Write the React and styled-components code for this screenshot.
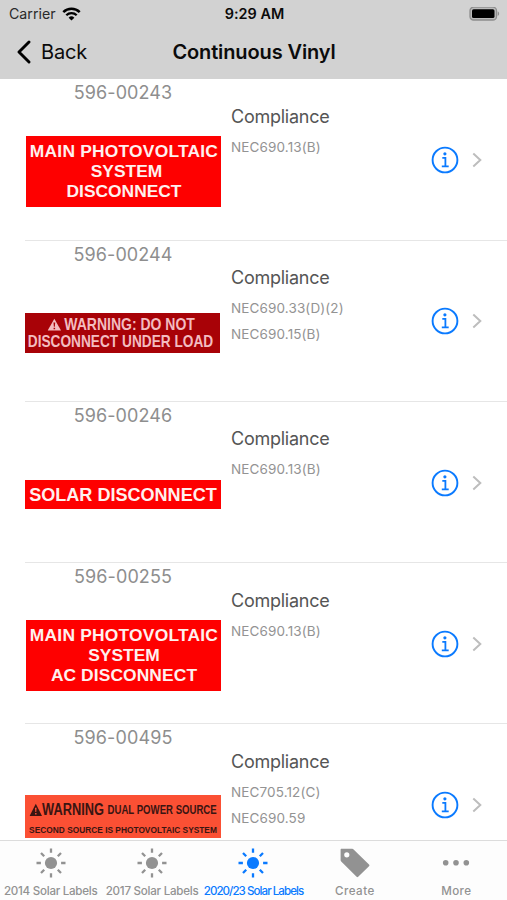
import React from "react"
import styled, { createGlobalStyle } from "styled-components"

const GlobalStyle = createGlobalStyle`
  body {
    margin: 0;
    background: #fff;
    font-family: Inter, "Liberation Sans", sans-serif;
  }

  * {
    box-sizing: border-box;
  }
`

const Screen = styled.div`
  display: flex;
  flex-direction: column;
  width: 507px;
  height: 900px;
  overflow: hidden;
  background: #fff;
`

const Header = styled.header`
  flex: none;
  height: 79.3px;
  background: #d2d2d2;
  color: #0b0b0b;
`

const StatusBar = styled.div`
  display: grid;
  grid-template-columns: 1fr auto 1fr;
  align-items: center;
  height: 27px;
  padding: 0 7px 0 9px;
`

const Carrier = styled.div`
  display: flex;
  align-items: center;
  gap: 6px;
  font-size: 14.2px;
  letter-spacing: 0;
  color: #2a2a2a;
`

const Clock = styled.div`
  font-size: 14.4px;
  font-weight: 600;
  letter-spacing: 0.05px;
`

const Battery = styled.svg`
  justify-self: end;
`

const NavBar = styled.div`
  display: grid;
  grid-template-columns: 1fr auto 1fr;
  align-items: center;
  height: 50px;
  padding: 0 15px 0 16px;
`

const BackButton = styled.button`
  display: flex;
  align-items: center;
  gap: 9px;
  padding: 0;
  border: 0;
  background: none;
  color: inherit;
  font: 400 20px Inter, sans-serif;
  letter-spacing: -0.2px;
`

const Title = styled.h1`
  margin: 0;
  font-size: 20px;
  font-weight: 600;
  letter-spacing: -0.12px;
`

const List = styled.ul`
  flex: 1;
  min-height: 0;
  margin: 0;
  padding: 0;
  overflow: hidden;
  list-style: none;
`

const Row = styled.li`
  display: grid;
  grid-template-columns: 196px 1fr auto;
  height: 161.25px;
  margin-left: 25px;
  border-bottom: 1.5px solid #e6e6e6;
`

const Product = styled.div`
  display: flex;
  flex-direction: column;
`

const PartNumber = styled.div`
  height: 25px;
  font-size: 18px;
  line-height: 27px;
  letter-spacing: 0.1px;
  text-align: center;
  color: #8e8e8e;
`

const SignArea = styled.div`
  display: flex;
  align-items: center;
  height: 134.5px;
`

const Sign = styled.div`
  display: flex;
  flex-direction: column;
  justify-content: center;
  width: ${p => p.$width || 195}px;
  height: ${p => p.$height}px;
  margin-left: ${p => p.$left || 0}px;
  padding-top: ${p => p.$top || 0}px;
  background: ${p => p.$bg};
  color: ${p => p.$color};
  font-family: "Liberation Sans", Arial, sans-serif;
  font-weight: 700;
`

const SignLine = styled.div`
  display: flex;
  flex: none;
  align-items: center;
  justify-content: center;
  gap: ${p => p.$gap || 0}px;
  height: ${p => p.$height}px;
  white-space: nowrap;
  transform: translateX(${p => p.$shift || 0}px) scaleX(${p => p.$stretch || 1});

  > * {
    flex: none;
  }
`

const SignText = styled.span`
  font-size: ${p => p.$size}px;
  line-height: 1;
  letter-spacing: ${p => p.$spacing || 0}px;
`

const Details = styled.div`
  padding: 27.7px 0 0 10px;
`

const Heading = styled.div`
  font-size: 18px;
  line-height: 20px;
  letter-spacing: -0.25px;
  color: #555;
`

const Codes = styled.div`
  padding-top: 7px;
`

const Code = styled.div`
  height: 26px;
  font-size: 13.5px;
  line-height: 26px;
  letter-spacing: 0.12px;
  color: #939393;
`

const Actions = styled.div`
  display: flex;
  align-items: center;
  gap: 13px;
  padding: 1.5px 24px 0 0;
`

const TabBar = styled.nav`
  display: grid;
  flex: none;
  grid-template-columns: repeat(5, minmax(0, 1fr));
  height: 60.5px;
  border-top: 1.5px solid #dcdcdc;
  background: #fdfdfd;
`

const Tab = styled.div`
  display: flex;
  flex-direction: column;
  align-items: center;
  padding-top: 7.5px;
  color: ${p => (p.$active ? "#0a7aff" : "#929292")};
`

const TabLabel = styled.span`
  margin-top: 5px;
  font-size: 11.6px;
  font-weight: 500;
  line-height: 16px;
  letter-spacing: ${p => p.$spacing}px;
  white-space: nowrap;
`

const WifiIcon = () => (
  <svg width="19" height="14" viewBox="0 0 19 14" fill="none" stroke="#000">
    <path d="M1.3 5.2a11.6 11.6 0 0 1 16.4 0" strokeWidth="2.5" />
    <path d="M4.3 8.3a7.4 7.4 0 0 1 10.4 0" strokeWidth="2.3" />
    <path d="M9.5 13.6 6.6 10.7a4.1 4.1 0 0 1 5.8 0z" fill="#000" stroke="none" />
  </svg>
)

const BatteryIcon = () => (
  <Battery width="31" height="14" viewBox="0 0 31 14">
    <rect x="1" y="0.2" width="26.5" height="12.8" rx="3.6" fill="#bbb" stroke="#8d8d8d" strokeWidth="1.3" />
    <rect x="3" y="2.2" width="22.5" height="8.8" rx="1.6" fill="#000" />
    <path d="M28.7 4.5v4.4c1.9-.6 1.9-3.8 0-4.4z" fill="#8d8d8d" />
  </Battery>
)

const BackIcon = () => (
  <svg width="16" height="24" viewBox="0 0 16 24" fill="none">
    <path d="M13 2 3 12l10 10" stroke="#000" strokeWidth="2.9" strokeLinecap="round" strokeLinejoin="round" />
  </svg>
)

const InfoIcon = () => (
  <svg width="28" height="28" viewBox="0 0 28 28" fill="none" stroke="#0a7aff">
    <circle cx="14" cy="14" r="12.4" strokeWidth="1.9" />
    <circle cx="13.9" cy="7.8" r="1.6" fill="#0a7aff" stroke="none" />
    <path d="M11.3 11.8h3.1v8.4M10.8 20.4h6.9" strokeWidth="1.8" />
  </svg>
)

const ChevronIcon = () => (
  <svg width="11" height="16" viewBox="0 0 11 16" fill="none">
    <path d="m1.3 1.6 7 6.4-7 6.4" stroke="#bdbdbd" strokeWidth="2" />
  </svg>
)

const AlertIcon = ({ width, height, mark }) => (
  <svg width={width} height={height} viewBox="0 0 14 14" preserveAspectRatio="none">
    <path d="M7 .8 13.8 13H.2z" fill="currentColor" />
    <path d="M6.1 4.7h1.8l-.4 4.4h-1zM6.2 10h1.6v1.6H6.2z" fill={mark} />
  </svg>
)

const SunIcon = () => (
  <svg width="30" height="30" viewBox="0 0 30 30" stroke="currentColor">
    <circle cx="15" cy="15" r="6.1" fill="currentColor" stroke="none" />
    <path
      d="M15 .5v4.2M15 25.3v4.2M.5 15h4.4M25.1 15h4.4M5 5l3.2 3.2M21.8 21.8 25 25M5 25l3.2-3.2M21.8 8.2 25 5"
      strokeWidth="2.3"
    />
  </svg>
)

const TagIcon = () => (
  <svg width="30" height="30" viewBox="0 0 30 30">
    <path
      d="M1.6.8h10.6c.6 0 1 .2 1.4.6l15.4 15.2c.6.6.6 1 0 1.6L18.2 28.8c-.6.6-1 .6-1.6 0L1.2 13.4C.8 13 .6 12.6.6 12V1.8c0-.7.3-1 1-1zM6.8 4.2a2.6 2.6 0 1 0 0 5.2 2.6 2.6 0 0 0 0-5.2z"
      fill="currentColor"
      fillRule="evenodd"
    />
  </svg>
)

const MoreIcon = () => (
  <svg width="30" height="30" viewBox="0 0 30 30" fill="currentColor">
    <circle cx="4.7" cy="14.7" r="2.8" />
    <circle cx="15" cy="14.7" r="2.8" />
    <circle cx="25.3" cy="14.7" r="2.8" />
  </svg>
)

const PvSign = ({ last, shift, spacing }) => (
  <Sign $height={71} $left={1} $top={1} $bg="#fe0000" $color="#fff0ee">
    <SignLine $height={20} $shift={0.5}>
      <SignText $size={17.4} $spacing={0.22}>MAIN PHOTOVOLTAIC</SignText>
    </SignLine>
    <SignLine $height={20} $shift={shift}>
      <SignText $size={17.4}>SYSTEM</SignText>
    </SignLine>
    <SignLine $height={20} $shift={0.5}>
      <SignText $size={17.4} $spacing={spacing}>{last}</SignText>
    </SignLine>
  </Sign>
)

const LoadSign = () => (
  <Sign $height={40} $bg="#a80207" $color="#f3bcc0">
    <SignLine $height={16.5} $gap={4} $shift={-1.5} $stretch={0.86}>
      <AlertIcon width={16} height={13.5} mark="#a80207" />
      <SignText $size={16.3}>WARNING: DO NOT</SignText>
    </SignLine>
    <SignLine $height={16.5} $shift={-2} $stretch={0.84}>
      <SignText $size={16.3}>DISCONNECT UNDER LOAD</SignText>
    </SignLine>
  </Sign>
)

const SolarSign = () => (
  <Sign $height={29} $width={196} $top={1} $bg="#fe0000" $color="#fff0ee">
    <SignLine $height={20} $stretch={0.95}>
      <SignText $size={19}>SOLAR DISCONNECT</SignText>
    </SignLine>
  </Sign>
)

const DualSign = () => (
  <Sign $height={43} $width={196} $top={7} $bg="#fb5034" $color="#3a1512">
    <SignLine $height={20} $stretch={0.8}>
      <AlertIcon width={16} height={14} mark="#fb5034" />
      <SignText $size={16}>WARNING&nbsp;</SignText>
      <SignText $size={12}>DUAL POWER SOURCE</SignText>
    </SignLine>
    <SignLine $height={21} $stretch={0.89}>
      <SignText $size={9.4}>SECOND SOURCE IS PHOTOVOLTAIC SYSTEM</SignText>
    </SignLine>
  </Sign>
)

const labels = [
  { id: "596-00243", codes: ["NEC690.13(B)"], sign: <PvSign last="DISCONNECT" shift={3} spacing={0} /> },
  { id: "596-00244", codes: ["NEC690.33(D)(2)", "NEC690.15(B)"], sign: <LoadSign /> },
  { id: "596-00246", codes: ["NEC690.13(B)"], sign: <SolarSign /> },
  { id: "596-00255", codes: ["NEC690.13(B)"], sign: <PvSign last="AC DISCONNECT" shift={0.5} spacing={0.1} /> },
  { id: "596-00495", codes: ["NEC705.12(C)", "NEC690.59"], sign: <DualSign /> },
]

const tabs = [
  { label: "2014 Solar Labels", icon: <SunIcon />, spacing: -0.27 },
  { label: "2017 Solar Labels", icon: <SunIcon />, spacing: -0.25 },
  { label: "2020/23 Solar Labels", icon: <SunIcon />, active: true, spacing: -0.97 },
  { label: "Create", icon: <TagIcon />, spacing: 0.45 },
  { label: "More", icon: <MoreIcon />, spacing: 0.4 },
]

const LabelRow = ({ id, codes, sign }) => (
  <Row>
    <Product>
      <PartNumber>{id}</PartNumber>
      <SignArea>{sign}</SignArea>
    </Product>
    <Details>
      <Heading>Compliance</Heading>
      <Codes>
        {codes.map(code => (
          <Code key={code}>{code}</Code>
        ))}
      </Codes>
    </Details>
    <Actions>
      <InfoIcon />
      <ChevronIcon />
    </Actions>
  </Row>
)

const App = () => (
  <>
    <GlobalStyle />
    <Screen>
      <Header>
        <StatusBar>
          <Carrier>
            Carrier
            <WifiIcon />
          </Carrier>
          <Clock>9:29 AM</Clock>
          <BatteryIcon />
        </StatusBar>
        <NavBar>
          <BackButton>
            <BackIcon />
            Back
          </BackButton>
          <Title>Continuous Vinyl</Title>
        </NavBar>
      </Header>
      <List>
        {labels.map(label => (
          <LabelRow key={label.id} {...label} />
        ))}
      </List>
      <TabBar>
        {tabs.map(tab => (
          <Tab key={tab.label} $active={tab.active}>
            {tab.icon}
            <TabLabel $spacing={tab.spacing}>{tab.label}</TabLabel>
          </Tab>
        ))}
      </TabBar>
    </Screen>
  </>
)

export default App
